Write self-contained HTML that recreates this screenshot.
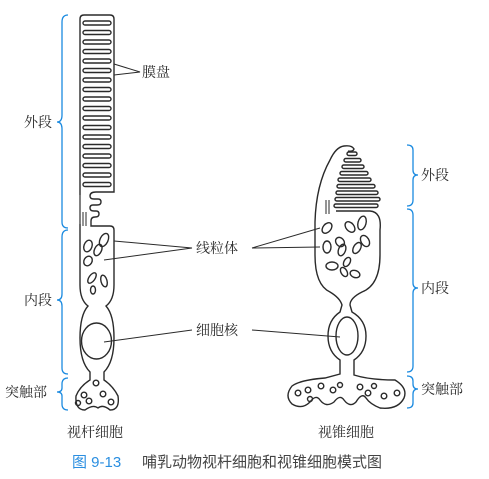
<!DOCTYPE html>
<html><head><meta charset="utf-8"><style>
html,body{margin:0;padding:0;background:#fff;}
svg{display:block}
text{font-family:"Liberation Serif","Noto Serif CJK SC",serif;fill:#2a2a2a;font-size:14px}
.c{font-family:"Liberation Sans","Noto Sans CJK SC",sans-serif;font-size:15px}
</style></head><body>
<svg width="489" height="479" viewBox="0 0 489 479" xmlns="http://www.w3.org/2000/svg">
<g fill="none" stroke="#2a2a2a" stroke-width="1.4">
<path d="M80 195 L80 19 Q80 15 84 15 L110 15 Q114 15 114 19 L114 192 L96 192"/>
<g>
<rect x="83" y="21" width="28" height="4" rx="2"/>
<rect x="83" y="30.5" width="28" height="4" rx="2"/>
<rect x="83" y="40" width="28" height="4" rx="2"/>
<rect x="83" y="49.5" width="28" height="4" rx="2"/>
<rect x="83" y="59" width="28" height="4" rx="2"/>
<rect x="83" y="68.5" width="28" height="4" rx="2"/>
<rect x="83" y="78" width="28" height="4" rx="2"/>
<rect x="83" y="87.5" width="28" height="4" rx="2"/>
<rect x="83" y="97" width="28" height="4" rx="2"/>
<rect x="83" y="106.5" width="28" height="4" rx="2"/>
<rect x="83" y="116" width="28" height="4" rx="2"/>
<rect x="83" y="125.5" width="28" height="4" rx="2"/>
<rect x="83" y="135" width="28" height="4" rx="2"/>
<rect x="83" y="144.5" width="28" height="4" rx="2"/>
<rect x="83" y="154" width="28" height="4" rx="2"/>
<rect x="83" y="163.5" width="28" height="4" rx="2"/>
<rect x="83" y="173" width="28" height="4" rx="2"/>
<rect x="83" y="182.5" width="28" height="4" rx="2"/>
</g>
<path d="M96 192 Q90 192 90 196 Q90 199 94 199 L98 199 Q101 199 101 202 Q101 205 97 205 L93 205 Q90 205 90 208 Q90 211 94 211 L96 211 Q99 211 99 214 Q99 217 95 217 Q91 217 91 221 L91 226 L110 226 Q114 226 114 230"/>
<path d="M80 195 L80 224" stroke-width="1.2"/>
<path d="M83 212 L83 226 M86 212 L86 226" stroke-width="1"/>
<path d="M80 224 L80 285 Q80 300 88 306 Q80 315 80 338 Q80 362 90 372 L90 380 Q80 386 76 396 Q75 410 85 410 Q93 404 98 408 Q103 404 110 410 Q120 410 118 396 Q113 386 104 380 L104 372 Q114 362 114 338 Q114 315 106 306 Q114 300 114 285 L114 230"/>
<ellipse cx="96.5" cy="341" rx="15" ry="18"/>
<ellipse cx="88" cy="246" rx="4" ry="6" transform="rotate(20 88 246)"/>
<ellipse cx="104" cy="240" rx="4" ry="7" transform="rotate(25 104 240)"/>
<ellipse cx="98" cy="250" rx="3.5" ry="6" transform="rotate(25 98 250)"/>
<ellipse cx="88" cy="261" rx="4" ry="5" transform="rotate(30 88 261)"/>
<ellipse cx="92" cy="278" rx="3" ry="6" transform="rotate(35 92 278)"/>
<ellipse cx="104" cy="281" rx="3" ry="6" transform="rotate(-15 104 281)"/>
<ellipse cx="93" cy="290" rx="2.5" ry="4"/>
<circle cx="96" cy="383" r="2.8"/><circle cx="84" cy="395" r="2.8"/><circle cx="89" cy="401" r="2.8"/><circle cx="103" cy="394" r="2.8"/><circle cx="111" cy="402" r="2.8"/><circle cx="78" cy="403" r="2.5"/>
<path d="M336 211 L370 211 Q382 212 380 230 L380 255 Q380 285 362 292 Q350 298 350 305 L352 312 Q366 320 366 336 Q366 352 354 360 L354 375 Q370 380 395 380 Q408 388 404 398 Q398 410 380 408 Q370 404 366 398 Q362 392 356 402 Q350 408 344 400 Q340 394 334 402 Q326 408 320 400 Q316 394 310 402 Q302 410 292 404 Q284 396 292 386 Q300 380 325 378 L340 374 L340 360 Q328 352 328 336 Q328 320 340 312 L342 305 Q340 298 330 292 Q315 285 315 255 L315 222 Q316 185 330 160 Q336 147 344 146 Q352 145 354 149 Q353 152 348 151"/>
<rect x="347" y="152" width="10" height="3.5" rx="1.75"/>
<rect x="344" y="158.5" width="17" height="3.5" rx="1.75"/>
<rect x="342" y="165" width="22" height="3.5" rx="1.75"/>
<rect x="340" y="171.5" width="28" height="3.5" rx="1.75"/>
<rect x="338" y="178" width="33" height="3.5" rx="1.75"/>
<rect x="337" y="184.5" width="38" height="3.5" rx="1.75"/>
<rect x="336" y="191" width="42" height="3.5" rx="1.75"/>
<rect x="335" y="197.5" width="45" height="3.5" rx="1.75"/>
<rect x="334" y="204" width="44" height="3.5" rx="1.75"/>
<path d="M326 200 L326 214 M329 200 L329 214" stroke-width="1"/>
<ellipse cx="327" cy="228" rx="4" ry="6" transform="rotate(40 327 228)"/>
<ellipse cx="350" cy="227" rx="4" ry="6" transform="rotate(-40 350 227)"/>
<ellipse cx="362" cy="223" rx="4" ry="7" transform="rotate(15 362 223)"/>
<ellipse cx="340" cy="242" rx="4" ry="5" transform="rotate(-40 340 242)"/>
<ellipse cx="365" cy="241" rx="4" ry="6" transform="rotate(-30 365 241)"/>
<ellipse cx="327" cy="247" rx="4" ry="6"/>
<ellipse cx="342" cy="250" rx="3.5" ry="6" transform="rotate(20 342 250)"/>
<ellipse cx="357" cy="248" rx="3.5" ry="6" transform="rotate(30 357 248)"/>
<ellipse cx="332" cy="266" rx="6" ry="4"/>
<ellipse cx="347" cy="262" rx="3" ry="5" transform="rotate(30 347 262)"/>
<ellipse cx="344" cy="272" rx="3" ry="5" transform="rotate(-30 344 272)"/>
<ellipse cx="355" cy="274" rx="5" ry="3.5" transform="rotate(20 355 274)"/>
<ellipse cx="347" cy="336" rx="11" ry="19"/>
<circle cx="298" cy="393" r="2.8"/><circle cx="308" cy="390" r="2.8"/><circle cx="321" cy="386" r="2.8"/><circle cx="310" cy="399" r="2.5"/><circle cx="333" cy="390" r="2.8"/><circle cx="340" cy="385" r="2.5"/><circle cx="360" cy="387" r="2.8"/><circle cx="368" cy="393" r="2.8"/><circle cx="374" cy="386" r="2.5"/><circle cx="384" cy="396" r="2.8"/><circle cx="397" cy="393" r="2.8"/>
<path d="M114 64 L140 72 L114 75 M114 241 L192 248 L104 260 M252 248 L320 228 M252 248 L320 247 M104 342 L192 330 M252 330 L340 337" stroke-width="1"/>
</g>
<g fill="none" stroke="#1a8ae0" stroke-width="1.3">
<path d="M68 15 Q62 15 62 22 L62 115 Q62 122 57 122 Q62 122 62 129 L62 222 Q62 228 68 228"/>
<path d="M68 230 Q62 230 62 237 L62 294 Q62 300 57 300 Q62 300 62 306 L62 368 Q62 374 68 374"/>
<path d="M68 378 Q62 378 62 384 L62 388 Q62 392 57 392 Q62 392 62 396 L62 404 Q62 410 68 410"/>
<path d="M407 145 Q413 145 413 150 L413 170 Q413 175 418 175 Q413 175 413 180 L413 200 Q413 206 407 206"/>
<path d="M407 209 Q413 209 413 215 L413 283 Q413 288 418 288 Q413 288 413 293 L413 366 Q413 372 407 372"/>
<path d="M407 376 Q413 376 413 381 L413 384 Q413 389 418 389 Q413 389 413 394 L413 403 Q413 408 407 408"/>
</g>
<text x="24" y="127">外段</text>
<text x="24" y="305">内段</text>
<text x="5" y="397">突触部</text>
<text x="421" y="180">外段</text>
<text x="421" y="293">内段</text>
<text x="421" y="394">突触部</text>
<text x="142" y="77">膜盘</text>
<text x="196" y="253">线粒体</text>
<text x="196" y="335">细胞核</text>
<text x="67" y="437">视杆细胞</text>
<text x="318" y="437">视锥细胞</text>
<text x="72" y="467" class="c" style="fill:#2a8ee0">图 9-13</text>
<text x="142" y="467" class="c" style="fill:#444">哺乳动物视杆细胞和视锥细胞模式图</text>
</svg>
</body></html>
